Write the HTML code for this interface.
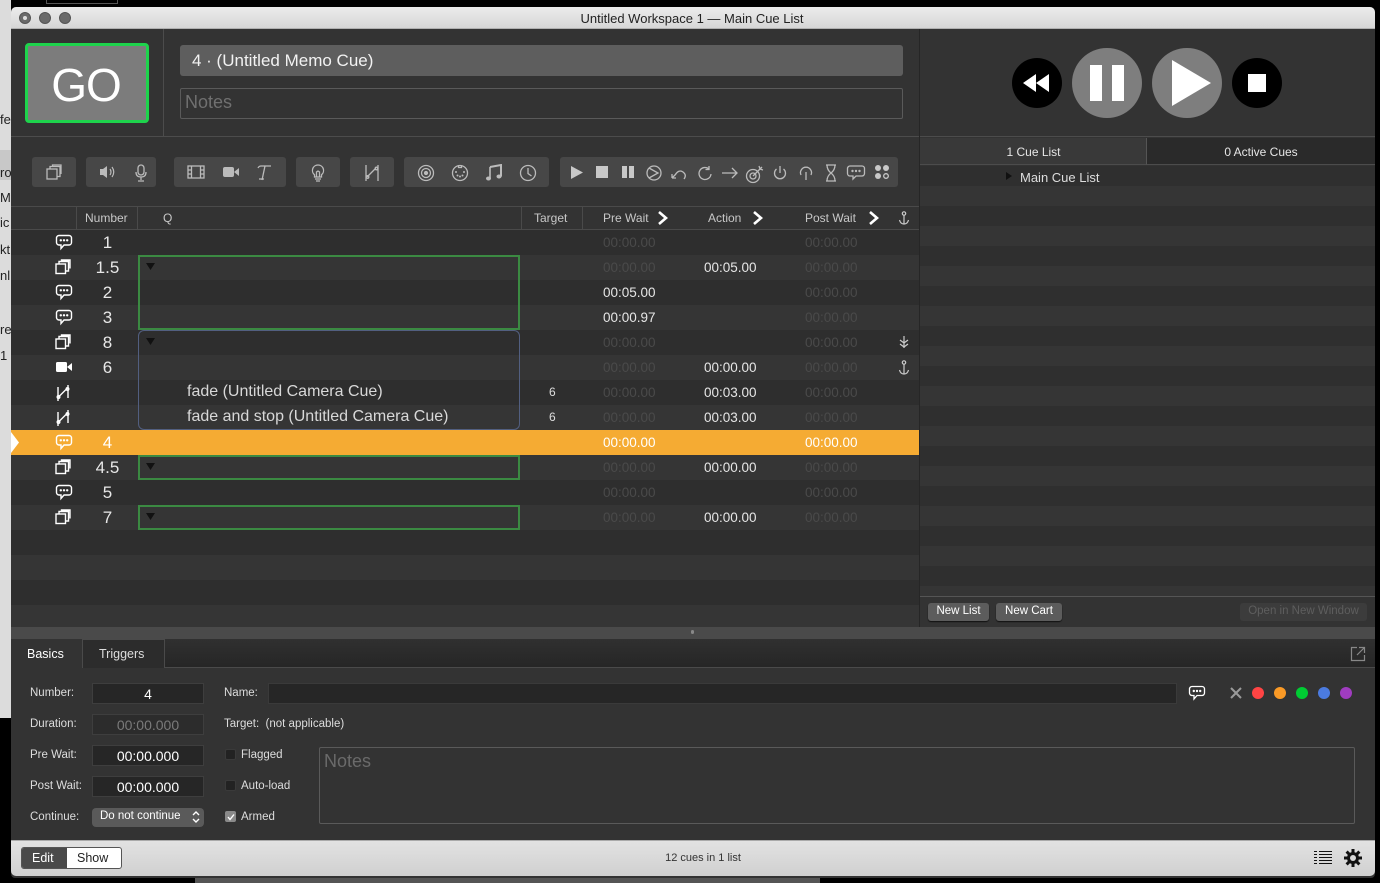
<!DOCTYPE html>
<html><head><meta charset="utf-8"><style>
*{box-sizing:border-box;margin:0;padding:0}
body{width:1380px;height:883px;overflow:hidden;background:#000;font-family:"Liberation Sans",sans-serif;position:relative}
.a{position:absolute}
.t{position:absolute;white-space:nowrap}
.tb{position:absolute;top:157px;height:30px;background:#474747;border-radius:3px}
.ic{position:absolute;top:7px}
.row{position:absolute;left:11px;width:908px;height:25px}
.num{position:absolute;left:70px;width:53px;text-align:center;top:3px;font-size:17px;color:#e8e8e8}
.tm{position:absolute;top:5px;font-size:13.5px;color:#4a4a4a;width:80px}
.w{color:#e6e6e6}
.rib{position:absolute;left:44px;top:4px}
.ar{position:absolute;top:211px}
</style></head><body>
<div class="a" style="left:0;top:0;width:11px;height:718px;background:#dcdcdc"></div>
<div class="a" style="left:0;top:150px;width:11px;height:30px;background:#c8c8c8"></div>
<div class="t" style="left:0;top:112px;font-size:13px;color:#222">fe</div>
<div class="t" style="left:0;top:165px;font-size:13px;color:#222">ro</div>
<div class="t" style="left:0;top:190px;font-size:13px;color:#222">My</div>
<div class="t" style="left:0;top:215px;font-size:13px;color:#222">ic</div>
<div class="t" style="left:0;top:242px;font-size:13px;color:#222">kt</div>
<div class="t" style="left:0;top:268px;font-size:13px;color:#222">nl</div>
<div class="t" style="left:0;top:322px;font-size:13px;color:#222">re</div>
<div class="t" style="left:0;top:348px;font-size:13px;color:#222">1</div>
<div class="a" style="left:46px;top:0;width:72px;height:4px;border:1px solid #555;border-top:none"></div>
<div class="a" style="left:195px;top:876px;width:625px;height:7px;background:#555"></div>

<div class="a" style="left:11px;top:7px;width:1364px;height:871px;background:#333;border-radius:5px 5px 4px 4px;overflow:hidden">
 <div class="a" style="left:0;top:0;width:1364px;height:22px;background:linear-gradient(#ececec,#d6d6d6);border-bottom:1px solid #b0b0b0"></div>
 <div class="a" style="left:8px;top:5px;width:12px;height:12px;border-radius:50%;background:#6a6a6a;border:1px solid #555"></div>
 <div class="a" style="left:12px;top:9px;width:4px;height:4px;border-radius:50%;background:#ddd"></div>
 <div class="a" style="left:28px;top:5px;width:12px;height:12px;border-radius:50%;background:#6a6a6a;border:1px solid #555"></div>
 <div class="a" style="left:48px;top:5px;width:12px;height:12px;border-radius:50%;background:#6a6a6a;border:1px solid #555"></div>
 <div class="t" style="left:0;width:1362px;text-align:center;top:4px;font-size:13px;color:#222">Untitled Workspace 1 — Main Cue List</div>
</div>

<div class="a" style="left:11px;top:29px;width:908px;height:108px;background:#333;border-bottom:1px solid #4c4c4c"></div>
<div class="a" style="left:163px;top:29px;width:1px;height:108px;background:#4c4c4c"></div>
<div class="a" style="left:25px;top:43px;width:124px;height:80px;background:#7c7c7c;border:3px solid #1ed34c;border-radius:4px"></div>
<div class="t" style="left:25px;width:122px;text-align:center;top:58px;font-size:46px;color:#fff;letter-spacing:-1px">GO</div>
<div class="a" style="left:180px;top:45px;width:723px;height:31px;background:#5e5e5e;border-radius:3px"></div>
<div class="t" style="left:192px;top:51px;font-size:17px;color:#f2f2f2">4 · (Untitled Memo Cue)</div>
<div class="a" style="left:180px;top:88px;width:723px;height:31px;border:1px solid #5a5a5a;border-radius:2px"></div>
<div class="t" style="left:185px;top:92px;font-size:18px;color:#707070">Notes</div>

<div class="a" style="left:11px;top:138px;width:908px;height:68px;background:#333"></div>
<div class="tb" style="left:32px;width:44px"><svg class="ic" style="left:14px" width="16" height="16" fill="none" stroke="#bbb" stroke-width="1.3"><rect x="1" y="5" width="10" height="10"/><path d="M4 5V2.5h10v10h-3M6.5 2.5V1h8.5v9"/></svg></div>
<div class="tb" style="left:86px;width:70px"><svg class="ic" style="left:12px" width="20" height="16"><path d="M2 5h3l4-3v12l-4-3H2z" fill="#bbb"/><path d="M12 5q2 3 0 6M14 3q3.5 5 0 10" stroke="#bbb" fill="none" stroke-width="1.2"/></svg><svg class="ic" style="left:48px" width="14" height="18" fill="none" stroke="#bbb" stroke-width="1.3"><rect x="4" y="1" width="6" height="10" rx="3"/><path d="M2 8q0 5 5 5t5-5M7 13v3M4 17h6"/></svg></div>
<div class="tb" style="left:174px;width:112px"><svg class="ic" style="left:13px" width="18" height="16" fill="none" stroke="#bbb" stroke-width="1.3"><rect x="1" y="2" width="16" height="12"/><path d="M4.5 2v12M13.5 2v12M1 6h3.5M1 10h3.5M13.5 6h3.5M13.5 10h3.5"/></svg><svg class="ic" style="left:48px" width="18" height="16"><rect x="1" y="3" width="11" height="10" rx="2" fill="#bbb"/><path d="M12 8l5-4v8z" fill="#bbb"/></svg><svg class="ic" style="left:82px" width="16" height="18" fill="none" stroke="#bbb" stroke-width="1.3"><path d="M2 4q1-2 3-2h10M9 2l-3 14M3 15h5"/></svg></div>
<div class="tb" style="left:296px;width:44px"><svg class="ic" style="left:14px" width="16" height="18" fill="none" stroke="#bbb" stroke-width="1.3"><path d="M8 1a5.5 5.5 0 00-3.5 9.8V13h7v-2.2A5.5 5.5 0 008 1zM5 15h6M6 17h4M6.5 13V8l1.5-1 1.5 1v5"/></svg></div>
<div class="tb" style="left:350px;width:44px"><svg class="ic" style="left:14px" width="16" height="18" fill="none" stroke="#bbb" stroke-width="1.3"><path d="M2 1v16M14 1v16M3 13l9-9"/><circle cx="3.5" cy="13" r="1.3"/><circle cx="12.5" cy="4.5" r="1.3"/></svg></div>
<div class="tb" style="left:404px;width:145px"><svg class="ic" style="left:13px" width="18" height="18" fill="none" stroke="#bbb" stroke-width="1.3"><circle cx="9" cy="9" r="7.5"/><circle cx="9" cy="9" r="4.5"/><circle cx="9" cy="9" r="1.5" fill="#bbb"/></svg><svg class="ic" style="left:47px" width="18" height="18" fill="none" stroke="#bbb" stroke-width="1.3"><circle cx="9" cy="9" r="7.5"/><g fill="#bbb" stroke="none"><circle cx="5" cy="8" r="1"/><circle cx="13" cy="8" r="1"/><circle cx="9" cy="12.5" r="1"/><circle cx="6.5" cy="11.5" r="1"/><circle cx="11.5" cy="11.5" r="1"/></g><path d="M7.5 1.5v2h3v-2"/></svg><svg class="ic" style="left:81px" width="18" height="18"><path d="M5 3l11-2v11.5" stroke="#bbb" stroke-width="2" fill="none"/><path d="M5 3v11" stroke="#bbb" stroke-width="1.6"/><ellipse cx="3.5" cy="14.5" rx="2.5" ry="2" fill="#bbb"/><ellipse cx="14" cy="12.5" rx="2.5" ry="2" fill="#bbb"/></svg><svg class="ic" style="left:115px" width="18" height="18" fill="none" stroke="#bbb" stroke-width="1.3"><circle cx="9" cy="9" r="7.5"/><path d="M9 4v5.5l3.5 2.5"/></svg></div>
<div class="tb" style="left:560px;width:338px">
<svg class="ic" style="left:10px;top:8px" width="14" height="15"><path d="M1 1l12 6.5L1 14z" fill="#c8c8c8"/></svg>
<svg class="ic" style="left:36px;top:9px" width="13" height="13"><rect x="0" y="0" width="12" height="12" fill="#c8c8c8"/></svg>
<svg class="ic" style="left:62px;top:9px" width="13" height="13"><rect x="0" y="0" width="5" height="12" fill="#c8c8c8"/><rect x="7" y="0" width="5" height="12" fill="#c8c8c8"/></svg>
<svg class="ic" style="left:85px" width="18" height="18" fill="none" stroke="#bbb" stroke-width="1.3"><circle cx="9" cy="9" r="7"/><path d="M4 4l9 5-9 5"/></svg>
<svg class="ic" style="left:110px" width="18" height="18" fill="none" stroke="#bbb" stroke-width="1.3"><path d="M2 14L6 10M2 14v-4M2 14h4M5 11q4-6 8-3t1 7"/></svg>
<svg class="ic" style="left:136px" width="18" height="18" fill="none" stroke="#bbb" stroke-width="1.3"><path d="M13 5A6 6 0 1015 10M13 2v3.5h-3.5"/></svg>
<svg class="ic" style="left:161px" width="18" height="18" fill="none" stroke="#bbb" stroke-width="1.3"><path d="M1 9h15M11 4l5 5-5 5"/></svg>
<svg class="ic" style="left:185px" width="20" height="20" fill="none" stroke="#bbb" stroke-width="1.3"><circle cx="8" cy="12" r="6.5"/><circle cx="8" cy="12" r="3"/><path d="M8 12l9-9M14 2l1 3 3 1"/></svg>
<svg class="ic" style="left:212px" width="16" height="18" fill="none" stroke="#bbb" stroke-width="1.3"><path d="M8 2v7M4.5 5a5.5 5.5 0 107 0"/></svg>
<svg class="ic" style="left:238px" width="16" height="18" fill="none" stroke="#bbb" stroke-width="1.3"><path d="M8 16V8M3 11a5.5 5.5 0 1110 0"/></svg>
<svg class="ic" style="left:263px" width="16" height="18" fill="none" stroke="#bbb" stroke-width="1.3"><path d="M3 1h10M3 17h10M4 1q0 5 4 8t4 8M12 1q0 5-4 8t-4 8"/></svg>
<svg class="ic" style="left:286px" width="20" height="18" fill="none" stroke="#bbb" stroke-width="1.3"><path d="M4 2h12a2.5 2.5 0 012.5 2.5v5A2.5 2.5 0 0116 12h-6l-3 3v-3H4a2.5 2.5 0 01-2.5-2.5v-5A2.5 2.5 0 014 2z"/><g fill="#bbb" stroke="none"><circle cx="6.5" cy="7" r="1.2"/><circle cx="10" cy="7" r="1.2"/><circle cx="13.5" cy="7" r="1.2"/></g></svg>
<svg class="ic" style="left:314px" width="16" height="16"><circle cx="4" cy="4" r="3" fill="#c8c8c8"/><circle cx="12" cy="4" r="3" fill="#c8c8c8"/><circle cx="4" cy="12" r="3" fill="#c8c8c8"/><circle cx="12" cy="12" r="2.3" fill="none" stroke="#c8c8c8" stroke-width="1.3"/></svg>
</div>

<div class="a" style="left:11px;top:206px;width:908px;height:24px;background:#333;border-top:1px solid #4a4a4a;border-bottom:1px solid #4a4a4a"></div>
<div class="a" style="left:76px;top:207px;width:1px;height:22px;background:#4a4a4a"></div>
<div class="a" style="left:137px;top:207px;width:1px;height:22px;background:#4a4a4a"></div>
<div class="a" style="left:521px;top:207px;width:1px;height:22px;background:#4a4a4a"></div>
<div class="a" style="left:582px;top:207px;width:1px;height:22px;background:#4a4a4a"></div>
<div class="t" style="left:85px;top:211px;font-size:12px;color:#c8c8c8">Number</div>
<div class="t" style="left:163px;top:211px;font-size:12px;color:#c8c8c8">Q</div>
<div class="t" style="left:534px;top:211px;font-size:12px;color:#c8c8c8">Target</div>
<div class="t" style="left:603px;top:211px;font-size:12px;color:#c8c8c8">Pre Wait</div>
<div class="t" style="left:708px;top:211px;font-size:12px;color:#c8c8c8">Action</div>
<div class="t" style="left:805px;top:211px;font-size:12px;color:#c8c8c8">Post Wait</div>
<svg class="ar" style="left:657px" width="11" height="14"><path d="M2 1l7 6-7 6" stroke="#fff" stroke-width="2.6" fill="none"/></svg>
<svg class="ar" style="left:752px" width="11" height="14"><path d="M2 1l7 6-7 6" stroke="#fff" stroke-width="2.6" fill="none"/></svg>
<svg class="ar" style="left:868px" width="11" height="14"><path d="M2 1l7 6-7 6" stroke="#fff" stroke-width="2.6" fill="none"/></svg>
<svg class="a" style="left:898px;top:211px" width="12" height="14" fill="none" stroke="#ccc" stroke-width="1.2"><circle cx="6" cy="2.5" r="1.7"/><path d="M6 4.2V13M1.5 9q1 4 4.5 4t4.5-4"/></svg>

<div class="a" style="left:11px;top:230px;width:908px;height:397px;background:repeating-linear-gradient(#2e2e2e 0 25px,#353535 25px 50px)"></div>
<div class="a" style="left:11px;top:430px;width:908px;height:25px;background:#f5ab33"></div>
<svg class="a" style="left:11px;top:430px" width="9" height="25"><path d="M0 2l8 10.5L0 23z" fill="#fff"/></svg>

<div class="a" style="left:138px;top:255px;width:382px;height:75px;border:2px solid #3b8a42"></div>
<div class="a" style="left:138px;top:330px;width:382px;height:100px;border:1.5px solid #525f80;border-radius:6px"></div>
<div class="a" style="left:138px;top:455px;width:382px;height:25px;border:2px solid #3b8a42"></div>
<div class="a" style="left:138px;top:505px;width:382px;height:25px;border:2px solid #3b8a42"></div>
<svg class="a" style="left:146px;top:263px" width="9" height="7"><path d="M0 0h9L4.5 7z" fill="#111"/></svg>
<svg class="a" style="left:146px;top:338px" width="9" height="7"><path d="M0 0h9L4.5 7z" fill="#111"/></svg>
<svg class="a" style="left:146px;top:463px" width="9" height="7"><path d="M0 0h9L4.5 7z" fill="#111"/></svg>
<svg class="a" style="left:146px;top:513px" width="9" height="7"><path d="M0 0h9L4.5 7z" fill="#111"/></svg>

<div class="row" style="top:230px"><svg class="rib" width="18" height="17" fill="none" stroke="#fff" stroke-width="1.4"><path d="M4 1.5h10a2.5 2.5 0 012.5 2.5v4.5A2.5 2.5 0 0114 11H9l-3 3.5V11H4a2.5 2.5 0 01-2.5-2.5V4A2.5 2.5 0 014 1.5z"/><g fill="#fff" stroke="none"><circle cx="5.8" cy="6.3" r="1.2"/><circle cx="9" cy="6.3" r="1.2"/><circle cx="12.2" cy="6.3" r="1.2"/></g></svg><div class="num">1</div><div class="tm" style="left:592px">00:00.00</div><div class="tm" style="left:794px">00:00.00</div></div>
<div class="row" style="top:255px"><svg class="rib" width="16" height="16" fill="none" stroke="#fff" stroke-width="1.4"><rect x="1" y="5" width="9.5" height="9.5"/><path d="M4 5V2.5h9.5V12H10.5M6.5 2.5V1h8.5v8.5"/></svg><div class="num">1.5</div><div class="tm" style="left:592px">00:00.00</div><div class="tm w" style="left:693px">00:05.00</div><div class="tm" style="left:794px">00:00.00</div></div>
<div class="row" style="top:280px"><svg class="rib" width="18" height="17" fill="none" stroke="#fff" stroke-width="1.4"><path d="M4 1.5h10a2.5 2.5 0 012.5 2.5v4.5A2.5 2.5 0 0114 11H9l-3 3.5V11H4a2.5 2.5 0 01-2.5-2.5V4A2.5 2.5 0 014 1.5z"/><g fill="#fff" stroke="none"><circle cx="5.8" cy="6.3" r="1.2"/><circle cx="9" cy="6.3" r="1.2"/><circle cx="12.2" cy="6.3" r="1.2"/></g></svg><div class="num">2</div><div class="tm w" style="left:592px">00:05.00</div><div class="tm" style="left:794px">00:00.00</div></div>
<div class="row" style="top:305px"><svg class="rib" width="18" height="17" fill="none" stroke="#fff" stroke-width="1.4"><path d="M4 1.5h10a2.5 2.5 0 012.5 2.5v4.5A2.5 2.5 0 0114 11H9l-3 3.5V11H4a2.5 2.5 0 01-2.5-2.5V4A2.5 2.5 0 014 1.5z"/><g fill="#fff" stroke="none"><circle cx="5.8" cy="6.3" r="1.2"/><circle cx="9" cy="6.3" r="1.2"/><circle cx="12.2" cy="6.3" r="1.2"/></g></svg><div class="num">3</div><div class="tm w" style="left:592px">00:00.97</div><div class="tm" style="left:794px">00:00.00</div></div>
<div class="row" style="top:330px"><svg class="rib" width="16" height="16" fill="none" stroke="#fff" stroke-width="1.4"><rect x="1" y="5" width="9.5" height="9.5"/><path d="M4 5V2.5h9.5V12H10.5M6.5 2.5V1h8.5v8.5"/></svg><div class="num">8</div><div class="tm" style="left:592px">00:00.00</div><div class="tm" style="left:794px">00:00.00</div><svg class="a" style="left:888px;top:6px" width="10" height="13" fill="none" stroke="#ccc" stroke-width="1.2"><path d="M5 0v12M1 4l4 3 4-3M1 8l4 3 4-3"/></svg></div>
<div class="row" style="top:355px"><svg class="rib" width="18" height="16"><rect x="1" y="3" width="11" height="10" rx="1.5" fill="#fff"/><path d="M12 8l5-4v8z" fill="#fff"/></svg><div class="num">6</div><div class="tm" style="left:592px">00:00.00</div><div class="tm w" style="left:693px">00:00.00</div><div class="tm" style="left:794px">00:00.00</div><svg class="a" style="left:887px;top:5px" width="12" height="15" fill="none" stroke="#ccc" stroke-width="1.2"><circle cx="6" cy="2.5" r="1.7"/><path d="M6 4.2V14M1.5 10q1 4 4.5 4t4.5-4"/></svg></div>
<div class="row" style="top:380px"><svg class="rib" width="16" height="18" fill="none" stroke="#fff" stroke-width="1.4"><path d="M3 3v14M13 1v13M3.5 13l9-9"/><circle cx="3.5" cy="13" r="1.3"/><circle cx="12.5" cy="5" r="1.3"/></svg><div class="t" style="left:176px;top:3px;font-size:16px;color:#d8d8d8">fade (Untitled Camera Cue)</div><div class="t" style="left:538px;top:5px;font-size:12px;color:#ddd">6</div><div class="tm" style="left:592px">00:00.00</div><div class="tm w" style="left:693px">00:03.00</div><div class="tm" style="left:794px">00:00.00</div></div>
<div class="row" style="top:405px"><svg class="rib" width="16" height="18" fill="none" stroke="#fff" stroke-width="1.4"><path d="M3 3v14M13 1v13M3.5 13l9-9"/><circle cx="3.5" cy="13" r="1.3"/><circle cx="12.5" cy="5" r="1.3"/></svg><div class="t" style="left:176px;top:3px;font-size:16px;color:#d8d8d8">fade and stop (Untitled Camera Cue)</div><div class="t" style="left:538px;top:5px;font-size:12px;color:#ddd">6</div><div class="tm" style="left:592px">00:00.00</div><div class="tm w" style="left:693px">00:03.00</div><div class="tm" style="left:794px">00:00.00</div></div>
<div class="row" style="top:430px"><svg class="rib" width="18" height="17" fill="none" stroke="#fff" stroke-width="1.4"><path d="M4 1.5h10a2.5 2.5 0 012.5 2.5v4.5A2.5 2.5 0 0114 11H9l-3 3.5V11H4a2.5 2.5 0 01-2.5-2.5V4A2.5 2.5 0 014 1.5z"/><g fill="#fff" stroke="none"><circle cx="5.8" cy="6.3" r="1.2"/><circle cx="9" cy="6.3" r="1.2"/><circle cx="12.2" cy="6.3" r="1.2"/></g></svg><div class="num" style="color:#fff">4</div><div class="tm" style="left:592px;color:#fff">00:00.00</div><div class="tm" style="left:794px;color:#fff">00:00.00</div></div>
<div class="row" style="top:455px"><svg class="rib" width="16" height="16" fill="none" stroke="#fff" stroke-width="1.4"><rect x="1" y="5" width="9.5" height="9.5"/><path d="M4 5V2.5h9.5V12H10.5M6.5 2.5V1h8.5v8.5"/></svg><div class="num">4.5</div><div class="tm" style="left:592px">00:00.00</div><div class="tm w" style="left:693px">00:00.00</div><div class="tm" style="left:794px">00:00.00</div></div>
<div class="row" style="top:480px"><svg class="rib" width="18" height="17" fill="none" stroke="#fff" stroke-width="1.4"><path d="M4 1.5h10a2.5 2.5 0 012.5 2.5v4.5A2.5 2.5 0 0114 11H9l-3 3.5V11H4a2.5 2.5 0 01-2.5-2.5V4A2.5 2.5 0 014 1.5z"/><g fill="#fff" stroke="none"><circle cx="5.8" cy="6.3" r="1.2"/><circle cx="9" cy="6.3" r="1.2"/><circle cx="12.2" cy="6.3" r="1.2"/></g></svg><div class="num">5</div><div class="tm" style="left:592px">00:00.00</div><div class="tm" style="left:794px">00:00.00</div></div>
<div class="row" style="top:505px"><svg class="rib" width="16" height="16" fill="none" stroke="#fff" stroke-width="1.4"><rect x="1" y="5" width="9.5" height="9.5"/><path d="M4 5V2.5h9.5V12H10.5M6.5 2.5V1h8.5v8.5"/></svg><div class="num">7</div><div class="tm" style="left:592px">00:00.00</div><div class="tm w" style="left:693px">00:00.00</div><div class="tm" style="left:794px">00:00.00</div></div>

<div class="a" style="left:919px;top:29px;width:1px;height:598px;background:#262626"></div>
<div class="a" style="left:920px;top:29px;width:455px;height:108px;background:#333;border-bottom:1px solid #4c4c4c"></div>
<div class="a" style="left:1012px;top:58px;width:50px;height:50px;border-radius:50%;background:#000"></div>
<svg class="a" style="left:1022px;top:72px" width="30" height="22"><path d="M1 11l13-9v18zM14 11l13-9v18z" fill="#fff"/></svg>
<div class="a" style="left:1072px;top:48px;width:70px;height:70px;border-radius:50%;background:#7e7e7e"></div>
<div class="a" style="left:1090px;top:65px;width:12px;height:36px;background:#fff"></div>
<div class="a" style="left:1112px;top:65px;width:12px;height:36px;background:#fff"></div>
<div class="a" style="left:1152px;top:48px;width:70px;height:70px;border-radius:50%;background:#7e7e7e"></div>
<svg class="a" style="left:1172px;top:60px" width="40" height="46"><path d="M0 0l39 23L0 46z" fill="#fff"/></svg>
<div class="a" style="left:1232px;top:58px;width:50px;height:50px;border-radius:50%;background:#000"></div>
<div class="a" style="left:1248px;top:74px;width:18px;height:18px;background:#fff"></div>

<div class="a" style="left:920px;top:138px;width:227px;height:27px;background:#393939;border-bottom:1px solid #4c4c4c;border-right:1px solid #555"></div>
<div class="a" style="left:1147px;top:138px;width:228px;height:27px;background:#2a2a2a;border-bottom:1px solid #4c4c4c"></div>
<div class="t" style="left:920px;width:227px;text-align:center;top:145px;font-size:12px;color:#e6e6e6">1 Cue List</div>
<div class="t" style="left:1147px;width:228px;text-align:center;top:145px;font-size:12px;color:#e6e6e6">0 Active Cues</div>
<div class="a" style="left:920px;top:166px;width:455px;height:430px;background:repeating-linear-gradient(#2f2f2f 0 20px,#353535 20px 40px)"></div>
<svg class="a" style="left:1006px;top:172px" width="6" height="8"><path d="M0 0l6 4-6 4z" fill="#111"/></svg>
<div class="t" style="left:1020px;top:170px;font-size:13px;color:#ddd">Main Cue List</div>
<div class="a" style="left:920px;top:596px;width:455px;height:31px;background:#333;border-top:1px solid #555"></div>
<div class="a" style="left:928px;top:603px;width:61px;height:18px;background:#5c5c5c;border-radius:3px;box-shadow:0 1px 1px #111"></div>
<div class="t" style="left:928px;width:61px;text-align:center;top:605px;font-size:11.5px;color:#fff">New List</div>
<div class="a" style="left:996px;top:603px;width:66px;height:18px;background:#5c5c5c;border-radius:3px;box-shadow:0 1px 1px #111"></div>
<div class="t" style="left:996px;width:66px;text-align:center;top:605px;font-size:11.5px;color:#fff">New Cart</div>
<div class="a" style="left:1240px;top:603px;width:127px;height:18px;background:#3c3c3c;border-radius:3px"></div>
<div class="t" style="left:1240px;width:127px;text-align:center;top:605px;font-size:11.5px;color:#5e5e5e">Open in New Window</div>

<div class="a" style="left:11px;top:627px;width:1364px;height:12px;background:#4a4a4a"></div>
<div class="a" style="left:691px;top:630px;width:3px;height:4px;border-radius:2px;background:#888"></div>

<div class="a" style="left:11px;top:639px;width:1364px;height:29px;background:linear-gradient(#303030,#262626);border-bottom:1px solid #4a4a4a"></div>
<div class="a" style="left:11px;top:639px;width:71px;height:30px;background:#333"></div>
<div class="a" style="left:82px;top:639px;width:83px;height:29px;border:1px solid #4a4a4a;border-bottom:none;background:#2c2c2c"></div>
<div class="t" style="left:27px;top:647px;font-size:12.5px;color:#fff">Basics</div>
<div class="t" style="left:99px;top:647px;font-size:12.5px;color:#ddd">Triggers</div>
<svg class="a" style="left:1350px;top:646px" width="16" height="16" fill="none" stroke="#888" stroke-width="1.2"><path d="M7 1.5H1.5v13h13V9M9 1.5h5.5V7M14.5 1.5L7 9"/></svg>
<div class="a" style="left:11px;top:669px;width:1364px;height:171px;background:#333"></div>

<div class="t" style="left:30px;top:687px;font-size:11.5px;color:#ddd">Number:</div>
<div class="t" style="left:30px;top:718px;font-size:11.5px;color:#ddd">Duration:</div>
<div class="t" style="left:30px;top:749px;font-size:11.5px;color:#ddd">Pre Wait:</div>
<div class="t" style="left:30px;top:780px;font-size:11.5px;color:#ddd">Post Wait:</div>
<div class="t" style="left:30px;top:811px;font-size:11.5px;color:#ddd">Continue:</div>
<div class="a" style="left:92px;top:683px;width:112px;height:21px;background:#262626;border:1px solid #3e3e3e"></div>
<div class="t" style="left:92px;width:112px;text-align:center;top:686px;font-size:14px;color:#fff">4</div>
<div class="a" style="left:92px;top:714px;width:112px;height:21px;background:#2c2c2c;border:1px solid #3e3e3e"></div>
<div class="t" style="left:92px;width:112px;text-align:center;top:717px;font-size:14px;color:#7a7a7a">00:00.000</div>
<div class="a" style="left:92px;top:745px;width:112px;height:21px;background:#262626;border:1px solid #3e3e3e"></div>
<div class="t" style="left:92px;width:112px;text-align:center;top:748px;font-size:14px;color:#fff">00:00.000</div>
<div class="a" style="left:92px;top:776px;width:112px;height:21px;background:#262626;border:1px solid #3e3e3e"></div>
<div class="t" style="left:92px;width:112px;text-align:center;top:779px;font-size:14px;color:#fff">00:00.000</div>
<div class="a" style="left:92px;top:808px;width:112px;height:19px;background:#5a5a5a;border-radius:4px"></div>
<div class="t" style="left:100px;top:810px;font-size:11.5px;color:#fff">Do not continue</div>
<svg class="a" style="left:192px;top:810px" width="8" height="14" fill="none" stroke="#fff" stroke-width="1.4"><path d="M1 5l3-3 3 3M1 9l3 3 3-3"/></svg>

<div class="t" style="left:224px;top:687px;font-size:11.5px;color:#ddd">Name:</div>
<div class="a" style="left:268px;top:683px;width:909px;height:21px;background:#262626;border:1px solid #3a3a3a"></div>
<svg class="a" style="left:1188px;top:685px" width="18" height="17" fill="none" stroke="#fff" stroke-width="1.3"><path d="M4 1.5h10a2.5 2.5 0 012.5 2.5v4A2.5 2.5 0 0114 10.5H9l-3 3.5v-3.5H4A2.5 2.5 0 011.5 8V4A2.5 2.5 0 014 1.5z"/><g fill="#fff" stroke="none"><circle cx="5.8" cy="6" r="1.2"/><circle cx="9" cy="6" r="1.2"/><circle cx="12.2" cy="6" r="1.2"/></g></svg>
<svg class="a" style="left:1230px;top:687px" width="12" height="12" stroke="#9a9a9a" stroke-width="2"><path d="M1 1l10 10M11 1L1 11"/></svg>
<div class="a" style="left:1252px;top:687px;width:12px;height:12px;border-radius:50%;background:#f44"></div>
<div class="a" style="left:1274px;top:687px;width:12px;height:12px;border-radius:50%;background:#fa9a26"></div>
<div class="a" style="left:1296px;top:687px;width:12px;height:12px;border-radius:50%;background:#0c3"></div>
<div class="a" style="left:1318px;top:687px;width:12px;height:12px;border-radius:50%;background:#4b7be0"></div>
<div class="a" style="left:1340px;top:687px;width:12px;height:12px;border-radius:50%;background:#a03cc0"></div>

<div class="t" style="left:224px;top:718px;font-size:11.5px;color:#ddd">Target:&nbsp; (not applicable)</div>
<div class="a" style="left:225px;top:749px;width:11px;height:11px;border-radius:2px;background:#222;border:1px solid #3a3a3a"></div>
<div class="t" style="left:241px;top:749px;font-size:11.5px;color:#ddd">Flagged</div>
<div class="a" style="left:225px;top:780px;width:11px;height:11px;border-radius:2px;background:#222;border:1px solid #3a3a3a"></div>
<div class="t" style="left:241px;top:780px;font-size:11.5px;color:#ddd">Auto-load</div>
<div class="a" style="left:225px;top:811px;width:11px;height:11px;border-radius:2px;background:#8a8a8a"></div>
<svg class="a" style="left:226px;top:812px" width="10" height="10" fill="none" stroke="#fff" stroke-width="1.4"><path d="M2 5l2 2.5 4-5"/></svg>
<div class="t" style="left:241px;top:811px;font-size:11.5px;color:#ddd">Armed</div>
<div class="a" style="left:319px;top:747px;width:1036px;height:77px;border:1px solid #5a5a5a;border-radius:2px"></div>
<div class="t" style="left:324px;top:751px;font-size:18px;color:#6a6a6a">Notes</div>

<div class="a" style="left:11px;top:840px;width:1364px;height:36px;background:linear-gradient(#e2e2e2,#d0d0d0);border-top:1px solid #aaa;border-radius:0 0 5px 5px"></div>
<div class="a" style="left:21px;top:847px;width:101px;height:22px;border:1px solid #555;border-radius:3px;background:#fff;overflow:hidden"><div style="width:45px;height:22px;background:#4a4a4a"></div></div>
<div class="t" style="left:32px;top:851px;font-size:12.5px;color:#fff">Edit</div>
<div class="t" style="left:77px;top:851px;font-size:12.5px;color:#222">Show</div>
<div class="t" style="left:0;width:1406px;text-align:center;top:852px;font-size:11px;color:#333">12 cues in 1 list</div>
<svg class="a" style="left:1314px;top:850px" width="18" height="16" stroke="#111" stroke-width="1"><path d="M0 1.5h3M5 1.5h13M0 4.5h3M5 4.5h13M0 7.5h3M5 7.5h13M0 10.5h3M5 10.5h13M0 13.5h3M5 13.5h13"/></svg>
<svg class="a" style="left:1343px;top:848px" width="20" height="20"><g stroke="#111" stroke-width="3"><path d="M10 1v18M1 10h18M3.6 3.6l12.8 12.8M16.4 3.6L3.6 16.4"/></g><circle cx="10" cy="10" r="6" fill="#111"/><circle cx="10" cy="10" r="3" fill="#d8d8d8"/></svg>
</body></html>
